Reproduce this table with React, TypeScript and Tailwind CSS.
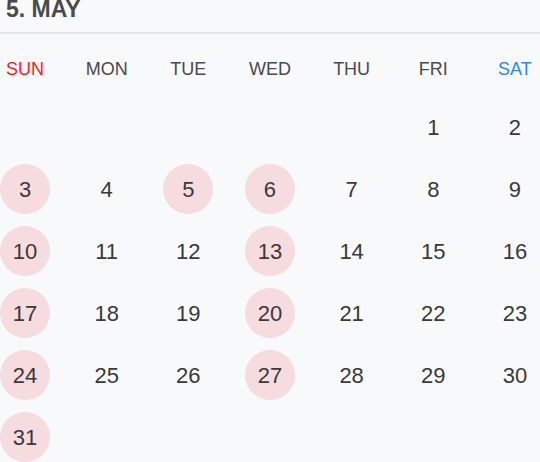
import React from 'react';

const DAYS = ['SUN', 'MON', 'TUE', 'WED', 'THU', 'FRI', 'SAT'];
const MARKED = [3, 5, 6, 10, 13, 17, 20, 24, 27, 31];

const App: React.FC = () => {
  // May starts on Friday: 5 empty slots before day 1
  const cells: (number | null)[] = [...Array(5).fill(null), ...Array.from({ length: 31 }, (_, i) => i + 1)];
  const rows: (number | null)[][] = [];
  for (let i = 0; i < cells.length; i += 7) rows.push(cells.slice(i, i + 7));

  return (
    <div className="w-[540px] h-[462px] overflow-hidden bg-[#f8f9fb] font-['Liberation_Sans',Arial,sans-serif]">
      <div className="h-[34px] border-b-2 border-[#e6e7ea] px-[6px] flex items-start">
        <h1 className="text-[23px] font-bold leading-[23px] -mt-[2px] text-[#4a4a4a]">5. MAY</h1>
      </div>
      <div className="flex justify-between mt-[10px] h-[50px]">
        {DAYS.map((d, i) => (
          <div
            key={d}
            className={`w-[50px] flex items-center justify-center text-[18px] ${
              i === 0 ? 'text-[#ff1a1a]' : i === 6 ? 'text-[#2b8ae6]' : 'text-[#4a4a4a]'
            }`}
          >
            {d}
          </div>
        ))}
      </div>
      <div className="flex flex-col gap-[12px] mt-[8px]">
        {rows.map((row, r) => (
          <div key={r} className="flex justify-between">
            {Array.from({ length: 7 }).map((_, c) => {
              const day = row[c];
              return (
                <div
                  key={c}
                  className={`w-[50px] h-[50px] rounded-full flex items-center justify-center text-[22px] text-[#3a3a3a] ${
                    day && MARKED.includes(day) ? 'bg-[#f6dbdf]' : ''
                  }`}
                >
                  {day ?? ''}
                </div>
              );
            })}
          </div>
        ))}
      </div>
    </div>
  );
};

export default App;
